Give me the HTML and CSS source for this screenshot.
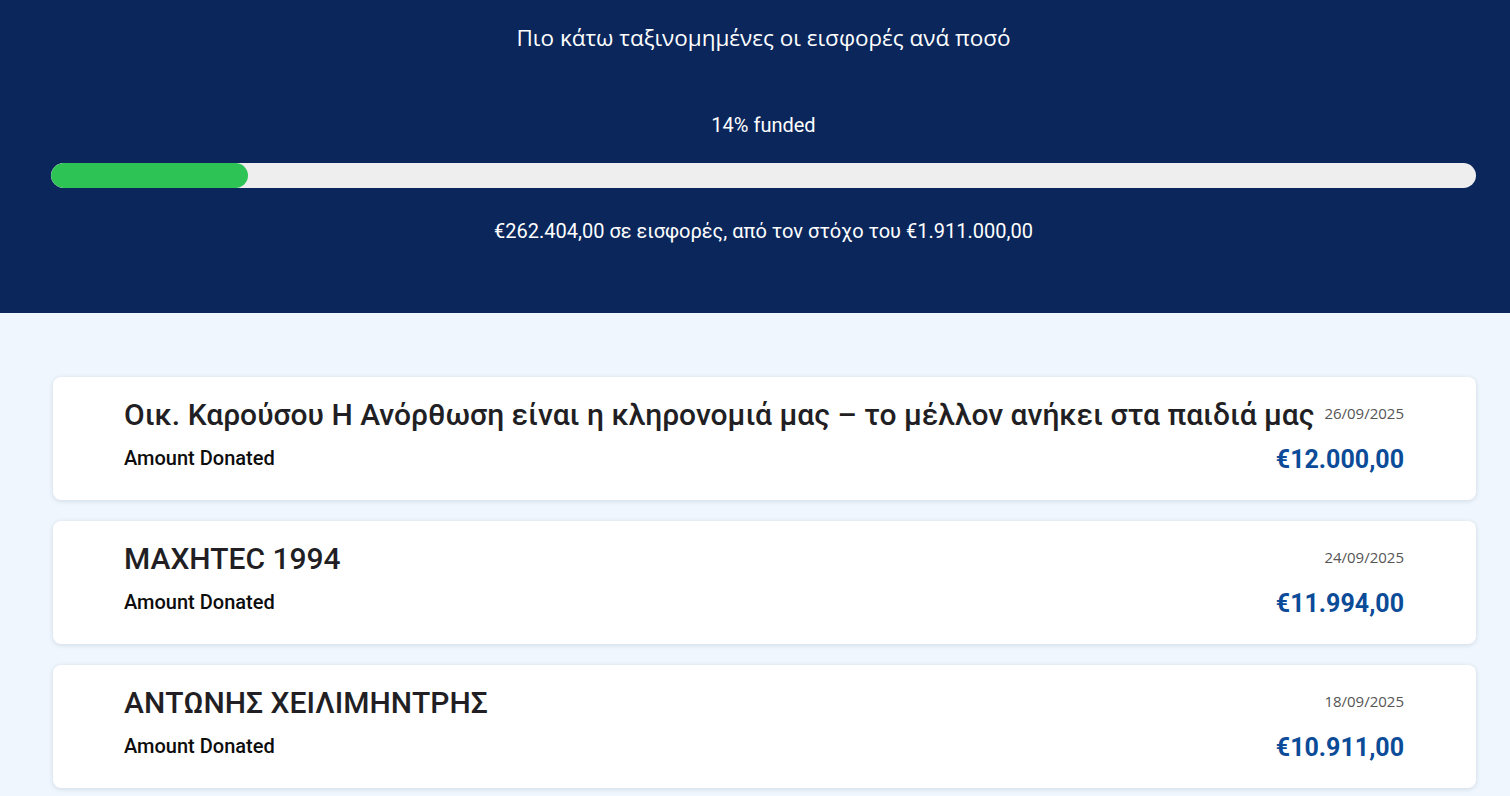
FILE: index.html
```html
<!DOCTYPE html>
<html lang="el">
<head>
<meta charset="utf-8">
<title>Εισφορές</title>
<link rel="stylesheet" href="styles.css">
</head>
<body>
<header class="hero">
  <h1 class="hero-title">Πιο κάτω ταξινομημένες οι εισφορές ανά ποσό</h1>
  <p class="funded">14% funded</p>
  <div class="bar"><div class="bar-fill" style="width:13.8%"></div></div>
  <p class="summary">€262.404,00 σε εισφορές, από τον στόχο του €1.911.000,00</p>
</header>
<main class="list">
  <article class="card">
    <div class="row top">
      <h2 class="name">Οικ. Καρούσου Η Ανόρθωση είναι η κληρονομιά μας – το μέλλον ανήκει στα παιδιά μας</h2>
      <span class="date">26/09/2025</span>
    </div>
    <div class="row bottom">
      <span class="label">Amount Donated</span>
      <span class="amount">€12.000,00</span>
    </div>
  </article>
  <article class="card">
    <div class="row top">
      <h2 class="name">MAXHTEC 1994</h2>
      <span class="date">24/09/2025</span>
    </div>
    <div class="row bottom">
      <span class="label">Amount Donated</span>
      <span class="amount">€11.994,00</span>
    </div>
  </article>
  <article class="card">
    <div class="row top">
      <h2 class="name">ΑΝΤΩΝΗΣ ΧΕΙΛΙΜΗΝΤΡΗΣ</h2>
      <span class="date">18/09/2025</span>
    </div>
    <div class="row bottom">
      <span class="label">Amount Donated</span>
      <span class="amount">€10.911,00</span>
    </div>
  </article>
</main>
</body>
</html>
```
FILE: styles.css
```css
* { box-sizing: border-box; }
html, body { margin: 0; padding: 0; }
body {
  background: #eff6fd;
  font-family: Roboto, "Liberation Sans", sans-serif;
}
.hero {
  background: #0a265b;
  color: #ffffff;
  height: 313px;
  padding: 23px 34px 0 51px;
  text-align: center;
}
.hero-title {
  margin: 0;
  font-family: "Open Sans", "Noto Sans", sans-serif;
  font-weight: 400;
  font-size: 22.5px;
  line-height: 30px;
}
.funded {
  margin: 60px 0 0;
  font-size: 20px;
  line-height: 24px;
}
.bar {
  margin-top: 26px;
  height: 25px;
  background: #eeeeee;
  border-radius: 13px;
  overflow: hidden;
}
.bar-fill {
  height: 100%;
  background: #2dc355;
  border-radius: 13px;
}
.summary {
  margin: 31px 0 0;
  font-size: 20px;
  line-height: 24px;
}
.list {
  padding: 64px 34px 20px 53px;
  display: flex;
  flex-direction: column;
  gap: 21px;
}
.card {
  background: #ffffff;
  border-radius: 8px;
  box-shadow: 0 1px 5px rgba(20, 40, 80, 0.14);
  padding: 20px 72px 25px 71px;
  height: 123px;
}
.row {
  display: flex;
  justify-content: space-between;
  align-items: center;
  gap: 8px;
}
.name {
  margin: 0;
  font-size: 30px;
  font-weight: 500;
  line-height: 36px;
  color: #221f24;
}
.date {
  font-family: "Open Sans", "Noto Sans", sans-serif;
  font-size: 15px;
  color: #555555;
  white-space: nowrap;
  align-self: flex-start;
  margin-top: 6px;
}
.bottom {
  margin-top: 12px;
  align-items: flex-start;
}
.label {
  font-size: 20px;
  line-height: 26px;
  font-weight: 500;
  color: #0d0d0d;
}
.amount {
  font-size: 25px;
  line-height: 30px;
  font-weight: 700;
  color: #0b4b98;
}
```
